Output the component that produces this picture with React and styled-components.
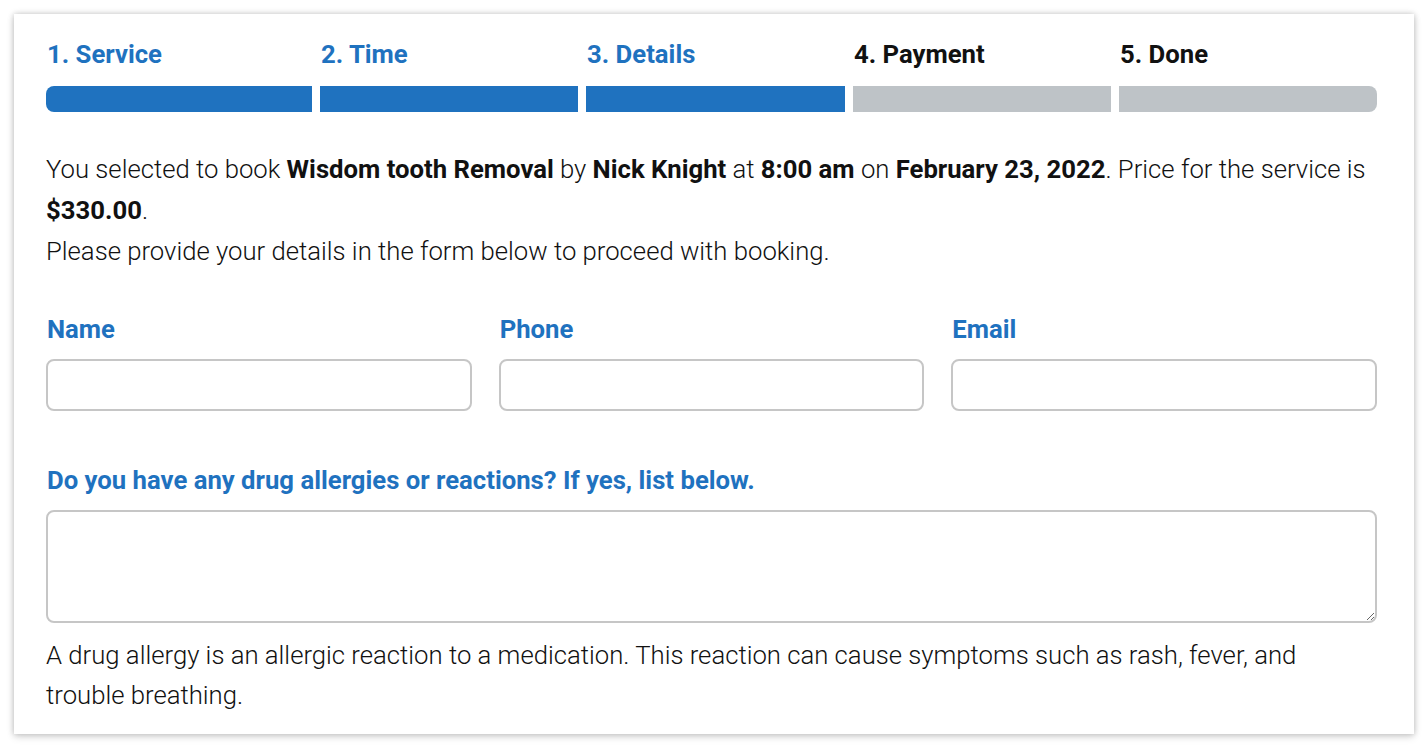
import React from "react";
import styled, { createGlobalStyle } from "styled-components";

const Global = createGlobalStyle`
  html, body { margin: 0; padding: 0; background: #ffffff; }
  body { font-family: Roboto, "Liberation Sans", sans-serif; color: #111; }
  * { box-sizing: border-box; }
`;

const BLUE = "#1f72bf";
const FS = "25.7px";

const Page = styled.div`
  padding: 14px;
  width: 1428px;
`;

const Card = styled.div`
  width: 1400px;
  background: #fff;
  box-shadow: 0 0 6px rgba(0, 0, 0, 0.22), 0 3px 8px rgba(0, 0, 0, 0.12);
  padding: 26px 37px 19px 32px;
`;

const Tracker = styled.div`
  display: grid;
  grid-template-columns: 266fr 258fr 259fr 258fr 258fr;
  column-gap: 8px;
`;

const Step = styled.div`
  display: flex;
  flex-direction: column;
  gap: 18px;
`;

const StepLabel = styled.div`
  font-size: ${FS};
  font-weight: 700;
  line-height: 28px;
  padding-left: 1px;
  color: ${(p) => (p.$active ? BLUE : "#111")};
`;

const StepBar = styled.div`
  height: 26px;
  background: ${(p) => (p.$active ? BLUE : "#bec3c7")};
  border-radius: ${(p) =>
    p.$first ? "8px 0 0 8px" : p.$last ? "0 8px 8px 0" : "0"};
`;

const Info = styled.div`
  margin-top: 37px;
  font-size: ${FS};
  font-weight: 300;
  line-height: 41px;
  b { font-weight: 700; }
  p { margin: 0; }
`;

const Fields = styled.div`
  margin-top: 43px;
  display: grid;
  grid-template-columns: repeat(3, 1fr);
  column-gap: 27px;
`;

const Field = styled.div`
  display: flex;
  flex-direction: column;
  gap: 16px;
`;

const Label = styled.label`
  font-size: ${FS};
  font-weight: 700;
  line-height: 28px;
  color: ${BLUE};
  padding-left: 1px;
`;

const Input = styled.input`
  height: 52px;
  width: 100%;
  border: 2px solid #c6c6c6;
  border-radius: 8px;
  font: inherit;
  font-size: 22px;
  padding: 0 12px;
  outline: none;
  background: #fff;
`;

const AllergyField = styled.div`
  margin-top: 55px;
  display: flex;
  flex-direction: column;
  gap: 16px;
`;

const TextArea = styled.textarea`
  display: block;
  width: 100%;
  height: 113px;
  border: 2px solid #c6c6c6;
  border-radius: 8px;
  font: inherit;
  font-size: 22px;
  padding: 10px 12px;
  resize: vertical;
  outline: none;
  background: #fff;
`;

const Help = styled.div`
  margin-top: 12px;
  font-size: ${FS};
  font-weight: 300;
  line-height: 40px;
`;

const steps = [
  { label: "1. Service", active: true },
  { label: "2. Time", active: true },
  { label: "3. Details", active: true },
  { label: "4. Payment", active: false },
  { label: "5. Done", active: false },
];

export default function App() {
  return (
    <>
      <Global />
      <Page>
        <Card>
          <Tracker>
            {steps.map((s, i) => (
              <Step key={s.label}>
                <StepLabel $active={s.active}>{s.label}</StepLabel>
                <StepBar
                  $active={s.active}
                  $first={i === 0}
                  $last={i === steps.length - 1}
                />
              </Step>
            ))}
          </Tracker>
          <Info>
            <p>
              You selected to book <b>Wisdom tooth Removal</b> by{" "}
              <b>Nick Knight</b> at <b>8:00 am</b> on <b>February 23, 2022</b>.
              Price for the service is <b>$330.00</b>.
            </p>
            <p>Please provide your details in the form below to proceed with booking.</p>
          </Info>
          <Fields>
            <Field>
              <Label htmlFor="name">Name</Label>
              <Input id="name" type="text" />
            </Field>
            <Field>
              <Label htmlFor="phone">Phone</Label>
              <Input id="phone" type="text" />
            </Field>
            <Field>
              <Label htmlFor="email">Email</Label>
              <Input id="email" type="text" />
            </Field>
          </Fields>
          <AllergyField>
            <Label htmlFor="allergy">
              Do you have any drug allergies or reactions? If yes, list below.
            </Label>
            <TextArea id="allergy" />
          </AllergyField>
          <Help>
            A drug allergy is an allergic reaction to a medication. This reaction can
            cause symptoms such as rash, fever, and trouble breathing.
          </Help>
        </Card>
      </Page>
    </>
  );
}
